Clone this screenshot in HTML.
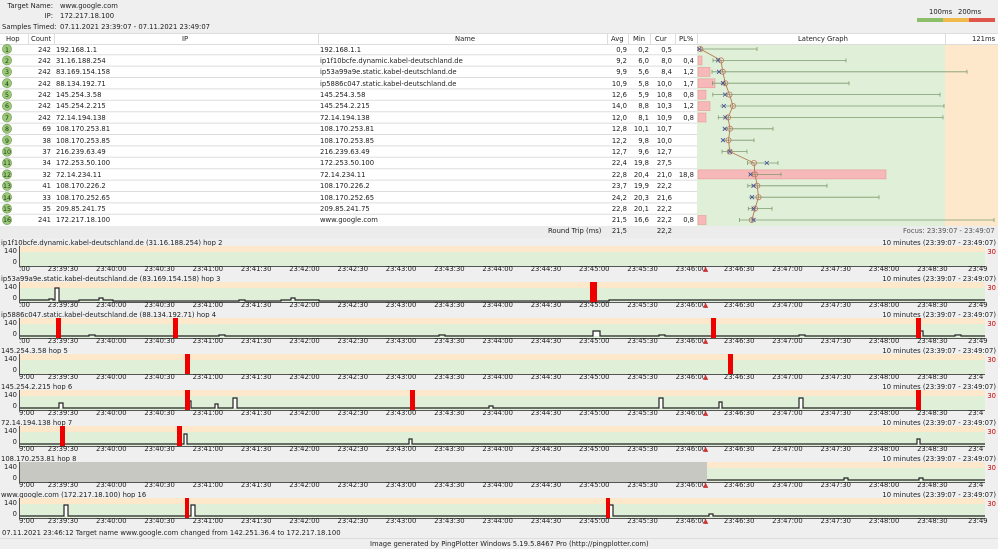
<!DOCTYPE html><html><head><meta charset="utf-8"><style>
*{margin:0;padding:0;box-sizing:border-box}
body{width:998px;height:549px;background:#efefef;font-family:"DejaVu Sans","Liberation Sans",sans-serif;font-size:6.8px;color:#222;position:relative;overflow:hidden}
.a{position:absolute;white-space:nowrap;line-height:9px}
.r{text-align:right}
.p{position:absolute;left:0;width:998px;height:36px}
.p .lab{position:absolute;left:1px;top:1px;line-height:9px}
.p .rt{position:absolute;right:2px;top:1px;line-height:9px}
.p .r30{position:absolute;right:2px;top:10px;color:#c00;line-height:9px}
.p .y1{position:absolute;right:981px;top:9px;line-height:9px}
.p .y0{position:absolute;right:981px;top:20px;line-height:9px}
.p svg{position:absolute;left:19px;top:8px}
.ax{position:absolute;top:27px;left:38.85px;line-height:9px;white-space:nowrap}
.ax span{display:inline-block;width:48.3px;text-align:center}
.p .s{position:absolute;top:27px;line-height:9px}
</style></head><body>
<div class="a r" style="left:0;width:53px;top:2px">Target Name:</div><div class="a" style="left:60px;top:2px">www.google.com</div>
<div class="a r" style="left:0;width:53px;top:12px">IP:</div><div class="a" style="left:60px;top:12px">172.217.18.100</div>
<div class="a" style="left:2px;top:23px">Samples Timed:</div><div class="a" style="left:60px;top:23px">07.11.2021 23:39:07 - 07.11.2021 23:49:07</div>
<div class="a" style="left:929px;top:8px">100ms</div><div class="a" style="left:958px;top:8px">200ms</div>
<svg style="position:absolute;left:0;top:0" width="998" height="240">
<rect x="917" y="18" width="26" height="4" fill="#8dbf6a"/><rect x="943" y="18" width="26" height="4" fill="#f0b94a"/><rect x="969" y="18" width="26" height="4" fill="#e0564a"/>
<rect x="0" y="33" width="998" height="193" fill="#fff"/>
<rect x="697" y="44" width="248" height="182" fill="#e0f0d8"/><rect x="945" y="44" width="53" height="182" fill="#fde8cc"/>
<g stroke="#ddd" stroke-width="1">
<line x1="0" y1="44.5" x2="998" y2="44.5"/><line x1="0" y1="33.5" x2="998" y2="33.5"/>
<line x1="28.5" y1="33" x2="28.5" y2="44"/><line x1="54.5" y1="33" x2="54.5" y2="44"/><line x1="318.5" y1="33" x2="318.5" y2="44"/><line x1="607.5" y1="33" x2="607.5" y2="44"/><line x1="628.5" y1="33" x2="628.5" y2="44"/><line x1="650.5" y1="33" x2="650.5" y2="44"/><line x1="675.5" y1="33" x2="675.5" y2="44"/><line x1="697.5" y1="33" x2="697.5" y2="44"/><line x1="945.5" y1="33" x2="945.5" y2="44"/>
<path d="M0 54.7H697M0 66.1H697M0 77.5H697M0 88.9H697M0 100.3H697M0 111.7H697M0 123.1H697M0 134.5H697M0 145.9H697M0 157.3H697M0 168.7H697M0 180.1H697M0 191.5H697M0 202.9H697M0 214.3H697"/>
</g>
<g fill="#f6b8b8" stroke="#e79a9a" stroke-width=".6">
<rect x="698" y="56" width="4" height="9"/><rect x="698" y="67.4" width="12" height="9"/><rect x="698" y="78.8" width="17" height="9"/><rect x="698" y="90.2" width="8" height="9"/><rect x="698" y="101.6" width="12" height="9"/><rect x="698" y="113" width="8" height="9"/><rect x="698" y="169.9" width="188" height="9"/><rect x="698" y="215.5" width="8" height="9"/>
</g>
<g stroke="#7d9a6c" stroke-width=".8" fill="none">
<path d="M698.5 49H757M757 47v4M713 60.4H846M846 58.4v4M713 58.4v4M712 71.8H967M967 69.8v4M712 69.8v4M712.5 83.2H849M849 81.2v4M712.5 81.2v4M712.8 94.6H940M940 92.6v4M712.8 92.6v4M720 106H944M944 104v4M718.3 117.4H943M943 115.4v4M718.3 115.4v4M723.3 128.8H773M773 126.8v4M722.5 140.2H754M754 138.2v4M722 151.6H747M747 149.6v4M722 149.6v4M747.5 163H778M778 161v4M747.5 161v4M749 174.4H781M781 172.4v4M747.8 185.8H827M827 183.8v4M747.8 183.8v4M748.8 197.2H879M879 195.2v4M748.3 208.6H772M772 206.6v4M748.3 206.6v4M739.5 220H994M994 218v4M739.5 218v4"/>
</g>
<polyline fill="none" stroke="#b07a50" stroke-width=".9" points="700.3,49 721,60.4 722.8,71.8 725.3,83.2 729.5,94.6 733,106 728,117.4 730,128.8 728.5,140.2 729.8,151.6 754,163 755,174.4 757.3,185.8 758.5,197.2 755,208.6 751.8,220"/>
<g fill="none" stroke="#c07a60" stroke-width=".8">
<circle cx="700.3" cy="49" r="2.6"/><circle cx="721" cy="60.4" r="2.6"/><circle cx="722.8" cy="71.8" r="2.6"/><circle cx="725.3" cy="83.2" r="2.6"/><circle cx="729.5" cy="94.6" r="2.6"/><circle cx="733" cy="106" r="2.6"/><circle cx="728" cy="117.4" r="2.6"/><circle cx="730" cy="128.8" r="2.6"/><circle cx="728.5" cy="140.2" r="2.6"/><circle cx="729.8" cy="151.6" r="2.6"/><circle cx="754" cy="163" r="2.6"/><circle cx="755" cy="174.4" r="2.6"/><circle cx="757.3" cy="185.8" r="2.6"/><circle cx="758.5" cy="197.2" r="2.6"/><circle cx="755" cy="208.6" r="2.6"/><circle cx="751.8" cy="220" r="2.6"/>
</g>
<g stroke="#3a4a9a" stroke-width=".8">
<path d="M697.3 47l4 4M701.3 47l-4 4M716 58.4l4 4M720 58.4l-4 4M717 69.8l4 4M721 69.8l-4 4M721 81.2l4 4M725 81.2l-4 4M723 92.6l4 4M727 92.6l-4 4M721.8 104l4 4M725.8 104l-4 4M723.3 115.4l4 4M727.3 115.4l-4 4M722.8 126.8l4 4M726.8 126.8l-4 4M721 138.2l4 4M725 138.2l-4 4M727.8 149.6l4 4M731.8 149.6l-4 4M764.8 161l4 4M768.8 161l-4 4M748.5 172.4l4 4M752.5 172.4l-4 4M751.5 183.8l4 4M755.5 183.8l-4 4M750 195.2l4 4M754 195.2l-4 4M751.5 206.6l4 4M755.5 206.6l-4 4M751.5 218l4 4M755.5 218l-4 4"/>
</g>
<g fill="#9cc87a" stroke="#6c9a50" stroke-width=".6">
<circle cx="7" cy="49" r="4.6"/><circle cx="7" cy="60.4" r="4.6"/><circle cx="7" cy="71.8" r="4.6"/><circle cx="7" cy="83.2" r="4.6"/><circle cx="7" cy="94.6" r="4.6"/><circle cx="7" cy="106" r="4.6"/><circle cx="7" cy="117.4" r="4.6"/><circle cx="7" cy="128.8" r="4.6"/><circle cx="7" cy="140.2" r="4.6"/><circle cx="7" cy="151.6" r="4.6"/><circle cx="7" cy="163" r="4.6"/><circle cx="7" cy="174.4" r="4.6"/><circle cx="7" cy="185.8" r="4.6"/><circle cx="7" cy="197.2" r="4.6"/><circle cx="7" cy="208.6" r="4.6"/><circle cx="7" cy="220" r="4.6"/>
</g>
<rect x="0" y="226" width="998" height="12" fill="#ececec"/>
</svg>
<div class="a" style="left:6px;top:35px">Hop</div><div class="a" style="left:31px;top:35px">Count</div><div class="a" style="left:182px;top:35px">IP</div><div class="a" style="left:455px;top:35px">Name</div><div class="a" style="left:611px;top:35px">Avg</div><div class="a" style="left:633px;top:35px">Min</div><div class="a" style="left:655px;top:35px">Cur</div><div class="a" style="left:679px;top:35px">PL%</div><div class="a" style="left:798px;top:35px">Latency Graph</div><div class="a" style="left:972px;top:35px">121ms</div>
<div style="position:absolute;left:0;top:44.5px;width:998px">
<style>.row{height:11.4px;position:relative;line-height:11.4px}.row div{position:absolute;top:0;white-space:nowrap}.h{left:0;width:14px;text-align:center;font-size:6.3px;color:#1b3a10}.c{left:20px;width:31px;text-align:right}.ip{left:56px}.nm{left:320px}.av{left:600px;width:27px;text-align:right}.mn{left:620px;width:29px;text-align:right}.cu{left:640px;width:32px;text-align:right}.pl{left:670px;width:24px;text-align:right}</style>
<div class="row"><div class="h">1</div><div class="c">242</div><div class="ip">192.168.1.1</div><div class="nm">192.168.1.1</div><div class="av">0,9</div><div class="mn">0,2</div><div class="cu">0,5</div></div>
<div class="row"><div class="h">2</div><div class="c">242</div><div class="ip">31.16.188.254</div><div class="nm">ip1f10bcfe.dynamic.kabel-deutschland.de</div><div class="av">9,2</div><div class="mn">6,0</div><div class="cu">8,0</div><div class="pl">0,4</div></div>
<div class="row"><div class="h">3</div><div class="c">242</div><div class="ip">83.169.154.158</div><div class="nm">ip53a99a9e.static.kabel-deutschland.de</div><div class="av">9,9</div><div class="mn">5,6</div><div class="cu">8,4</div><div class="pl">1,2</div></div>
<div class="row"><div class="h">4</div><div class="c">242</div><div class="ip">88.134.192.71</div><div class="nm">ip5886c047.static.kabel-deutschland.de</div><div class="av">10,9</div><div class="mn">5,8</div><div class="cu">10,0</div><div class="pl">1,7</div></div>
<div class="row"><div class="h">5</div><div class="c">242</div><div class="ip">145.254.3.58</div><div class="nm">145.254.3.58</div><div class="av">12,6</div><div class="mn">5,9</div><div class="cu">10,8</div><div class="pl">0,8</div></div>
<div class="row"><div class="h">6</div><div class="c">242</div><div class="ip">145.254.2.215</div><div class="nm">145.254.2.215</div><div class="av">14,0</div><div class="mn">8,8</div><div class="cu">10,3</div><div class="pl">1,2</div></div>
<div class="row"><div class="h">7</div><div class="c">242</div><div class="ip">72.14.194.138</div><div class="nm">72.14.194.138</div><div class="av">12,0</div><div class="mn">8,1</div><div class="cu">10,9</div><div class="pl">0,8</div></div>
<div class="row"><div class="h">8</div><div class="c">69</div><div class="ip">108.170.253.81</div><div class="nm">108.170.253.81</div><div class="av">12,8</div><div class="mn">10,1</div><div class="cu">10,7</div></div>
<div class="row"><div class="h">9</div><div class="c">38</div><div class="ip">108.170.253.85</div><div class="nm">108.170.253.85</div><div class="av">12,2</div><div class="mn">9,8</div><div class="cu">10,0</div></div>
<div class="row"><div class="h">10</div><div class="c">37</div><div class="ip">216.239.63.49</div><div class="nm">216.239.63.49</div><div class="av">12,7</div><div class="mn">9,6</div><div class="cu">12,7</div></div>
<div class="row"><div class="h">11</div><div class="c">34</div><div class="ip">172.253.50.100</div><div class="nm">172.253.50.100</div><div class="av">22,4</div><div class="mn">19,8</div><div class="cu">27,5</div></div>
<div class="row"><div class="h">12</div><div class="c">32</div><div class="ip">72.14.234.11</div><div class="nm">72.14.234.11</div><div class="av">22,8</div><div class="mn">20,4</div><div class="cu">21,0</div><div class="pl">18,8</div></div>
<div class="row"><div class="h">13</div><div class="c">41</div><div class="ip">108.170.226.2</div><div class="nm">108.170.226.2</div><div class="av">23,7</div><div class="mn">19,9</div><div class="cu">22,2</div></div>
<div class="row"><div class="h">14</div><div class="c">33</div><div class="ip">108.170.252.65</div><div class="nm">108.170.252.65</div><div class="av">24,2</div><div class="mn">20,3</div><div class="cu">21,6</div></div>
<div class="row"><div class="h">15</div><div class="c">35</div><div class="ip">209.85.241.75</div><div class="nm">209.85.241.75</div><div class="av">22,8</div><div class="mn">20,1</div><div class="cu">22,2</div></div>
<div class="row"><div class="h">16</div><div class="c">241</div><div class="ip">172.217.18.100</div><div class="nm">www.google.com</div><div class="av">21,5</div><div class="mn">16,6</div><div class="cu">22,2</div><div class="pl">0,8</div></div>
</div>
<div class="a" style="left:548px;top:227px">Round Trip (ms)</div><div class="a r" style="left:600px;width:27px;top:227px">21,5</div><div class="a r" style="left:640px;width:32px;top:227px">22,2</div><div class="a" style="left:903px;top:227px;color:#555">Focus: 23:39:07 - 23:49:07</div>

<!-- panels -->
<div class="p" style="top:238px"><div class="lab">ip1f10bcfe.dynamic.kabel-deutschland.de (31.16.188.254) hop 2</div><div class="rt">10 minutes (23:39:07 - 23:49:07)</div><div class="r30">30</div><div class="y1">140</div><div class="y0">0</div>
<svg width="966" height="21"><rect width="966" height="6" fill="#fde8cc"/><rect y="6" width="966" height="14" fill="#e0f0d8"/><path d="M.5 0V20.5H966" stroke="#555" fill="none"/></svg>
<div class="s" style="left:19px">:00</div><div class="ax"><span>23:39:30</span><span>23:40:00</span><span>23:40:30</span><span>23:41:00</span><span>23:41:30</span><span>23:42:00</span><span>23:42:30</span><span>23:43:00</span><span>23:43:30</span><span>23:44:00</span><span>23:44:30</span><span>23:45:00</span><span>23:45:30</span><span>23:46:00</span><span>23:46:30</span><span>23:47:00</span><span>23:47:30</span><span>23:48:00</span><span>23:48:30</span></div><div class="s" style="left:968px">23:49</div><div class="s" style="left:703px;color:#c33">▲</div></div>

<div class="p" style="top:274px"><div class="lab">ip53a99a9e.static.kabel-deutschland.de (83.169.154.158) hop 3</div><div class="rt">10 minutes (23:39:07 - 23:49:07)</div><div class="r30">30</div><div class="y1">140</div><div class="y0">0</div>
<svg width="966" height="21"><rect width="966" height="6" fill="#fde8cc"/><rect y="6" width="966" height="14" fill="#e0f0d8"/><path d="M0 18H30V17H34V18H36V6H40V19H60V18H80V16H84V18H94V19H220V18H226V19H262V18H272V16H276V18H300V19H590V18H966" stroke="#222" fill="#fff" stroke-width="1.2"/><rect x="571" y="0" width="7" height="20" fill="#e00"/><path d="M.5 0V20.5H966" stroke="#555" fill="none"/></svg>
<div class="s" style="left:19px">:00</div><div class="ax"><span>23:39:30</span><span>23:40:00</span><span>23:40:30</span><span>23:41:00</span><span>23:41:30</span><span>23:42:00</span><span>23:42:30</span><span>23:43:00</span><span>23:43:30</span><span>23:44:00</span><span>23:44:30</span><span>23:45:00</span><span>23:45:30</span><span>23:46:00</span><span>23:46:30</span><span>23:47:00</span><span>23:47:30</span><span>23:48:00</span><span>23:48:30</span></div><div class="s" style="left:968px">23:49</div><div class="s" style="left:703px;color:#c33">▲</div></div>

<div class="p" style="top:310px"><div class="lab">ip5886c047.static.kabel-deutschland.de (88.134.192.71) hop 4</div><div class="rt">10 minutes (23:39:07 - 23:49:07)</div><div class="r30">30</div><div class="y1">140</div><div class="y0">0</div>
<svg width="966" height="21"><rect width="966" height="6" fill="#fde8cc"/><rect y="6" width="966" height="14" fill="#e0f0d8"/><path d="M0 18H70V17H76V18H200V17H206V18H420V17H426V18H574V13H581V18H640V17H646V18H780V17H786V18H900V13H904V18H936V17H942V18H966" stroke="#222" fill="#fff" stroke-width="1.2"/><g fill="#e00"><rect x="37" width="5" height="20"/><rect x="154" width="5" height="20"/><rect x="692" width="5" height="20"/><rect x="897" width="5" height="20"/></g><path d="M.5 0V20.5H966" stroke="#555" fill="none"/></svg>
<div class="s" style="left:19px">:00</div><div class="ax"><span>23:39:30</span><span>23:40:00</span><span>23:40:30</span><span>23:41:00</span><span>23:41:30</span><span>23:42:00</span><span>23:42:30</span><span>23:43:00</span><span>23:43:30</span><span>23:44:00</span><span>23:44:30</span><span>23:45:00</span><span>23:45:30</span><span>23:46:00</span><span>23:46:30</span><span>23:47:00</span><span>23:47:30</span><span>23:48:00</span><span>23:48:30</span></div><div class="s" style="left:968px">23:49</div><div class="s" style="left:703px;color:#c33">▲</div></div>

<div class="p" style="top:346px"><div class="lab">145.254.3.58 hop 5</div><div class="rt">10 minutes (23:39:07 - 23:49:07)</div><div class="r30">30</div><div class="y1">140</div><div class="y0">0</div>
<svg width="966" height="21"><rect width="966" height="6" fill="#fde8cc"/><rect y="6" width="966" height="14" fill="#e0f0d8"/><g fill="#e00"><rect x="166" width="5" height="20"/><rect x="709" width="5" height="20"/></g><path d="M.5 0V20.5H966" stroke="#555" fill="none"/></svg>
<div class="s" style="left:19px">9:00</div><div class="ax"><span>23:39:30</span><span>23:40:00</span><span>23:40:30</span><span>23:41:00</span><span>23:41:30</span><span>23:42:00</span><span>23:42:30</span><span>23:43:00</span><span>23:43:30</span><span>23:44:00</span><span>23:44:30</span><span>23:45:00</span><span>23:45:30</span><span>23:46:00</span><span>23:46:30</span><span>23:47:00</span><span>23:47:30</span><span>23:48:00</span><span>23:48:30</span></div><div class="s" style="left:968px">23:4</div><div class="s" style="left:703px;color:#c33">▲</div></div>

<div class="p" style="top:382px"><div class="lab">145.254.2.215 hop 6</div><div class="rt">10 minutes (23:39:07 - 23:49:07)</div><div class="r30">30</div><div class="y1">140</div><div class="y0">0</div>
<svg width="966" height="21"><rect width="966" height="6" fill="#fde8cc"/><rect y="6" width="966" height="14" fill="#e0f0d8"/><path d="M0 18H40V13H44V18H168V11H172V18H196V14H199V18H214V8H218V18H470V16H474V18H640V8H644V18H700V12H703V18H780V8H784V18H900" stroke="#222" fill="#fff" stroke-width="1.2"/><g fill="#e00"><rect x="166" width="5" height="20"/><rect x="391" width="5" height="20"/><rect x="897" width="5" height="20"/></g><path d="M.5 0V20.5H966" stroke="#555" fill="none"/></svg>
<div class="s" style="left:19px">9:00</div><div class="ax"><span>23:39:30</span><span>23:40:00</span><span>23:40:30</span><span>23:41:00</span><span>23:41:30</span><span>23:42:00</span><span>23:42:30</span><span>23:43:00</span><span>23:43:30</span><span>23:44:00</span><span>23:44:30</span><span>23:45:00</span><span>23:45:30</span><span>23:46:00</span><span>23:46:30</span><span>23:47:00</span><span>23:47:30</span><span>23:48:00</span><span>23:48:30</span></div><div class="s" style="left:968px">23:4</div><div class="s" style="left:703px;color:#c33">▲</div></div>

<div class="p" style="top:418px"><div class="lab">72.14.194.138 hop 7</div><div class="rt">10 minutes (23:39:07 - 23:49:07)</div><div class="r30">30</div><div class="y1">140</div><div class="y0">0</div>
<svg width="966" height="21"><rect width="966" height="6" fill="#fde8cc"/><rect y="6" width="966" height="14" fill="#e0f0d8"/><path d="M0 18H165V8H168V18H390V13H393V18H898V13H901V18H966" stroke="#222" fill="#fff" stroke-width="1.2"/><g fill="#e00"><rect x="41" width="5" height="20"/><rect x="158" width="5" height="20"/></g><path d="M.5 0V20.5H966" stroke="#555" fill="none"/></svg>
<div class="s" style="left:19px">9:00</div><div class="ax"><span>23:39:30</span><span>23:40:00</span><span>23:40:30</span><span>23:41:00</span><span>23:41:30</span><span>23:42:00</span><span>23:42:30</span><span>23:43:00</span><span>23:43:30</span><span>23:44:00</span><span>23:44:30</span><span>23:45:00</span><span>23:45:30</span><span>23:46:00</span><span>23:46:30</span><span>23:47:00</span><span>23:47:30</span><span>23:48:00</span><span>23:48:30</span></div><div class="s" style="left:968px">23:4</div><div class="s" style="left:703px;color:#c33">▲</div></div>

<div class="p" style="top:454px"><div class="lab">108.170.253.81 hop 8</div><div class="rt">10 minutes (23:39:07 - 23:49:07)</div><div class="r30">30</div><div class="y1">140</div><div class="y0">0</div>
<svg width="966" height="21"><rect width="966" height="6" fill="#fde8cc"/><rect y="6" width="966" height="14" fill="#e0f0d8"/><rect width="688" height="20" fill="#c8c8c2"/><path d="M688 18H825V16H829V18H900V16H904V18H966" stroke="#222" fill="none" stroke-width="1.2"/><path d="M.5 0V20.5H966" stroke="#555" fill="none"/></svg>
<div class="s" style="left:19px">9:00</div><div class="ax"><span>23:39:30</span><span>23:40:00</span><span>23:40:30</span><span>23:41:00</span><span>23:41:30</span><span>23:42:00</span><span>23:42:30</span><span>23:43:00</span><span>23:43:30</span><span>23:44:00</span><span>23:44:30</span><span>23:45:00</span><span>23:45:30</span><span>23:46:00</span><span>23:46:30</span><span>23:47:00</span><span>23:47:30</span><span>23:48:00</span><span>23:48:30</span></div><div class="s" style="left:968px">23:4</div><div class="s" style="left:703px;color:#c33">▲</div></div>

<div class="p" style="top:490px"><div class="lab">www.google.com (172.217.18.100) hop 16</div><div class="rt">10 minutes (23:39:07 - 23:49:07)</div><div class="r30">30</div><div class="y1">140</div><div class="y0">0</div>
<svg width="966" height="21"><rect width="966" height="6" fill="#fde8cc"/><rect y="6" width="966" height="14" fill="#e0f0d8"/><path d="M0 18H45V7H49V18H172V7H176V18H590V7H594V18H690V16H694V18H966" stroke="#222" fill="#fff" stroke-width="1.2"/><g fill="#e00"><rect x="166" width="4" height="20"/><rect x="587" width="4" height="20"/></g><path d="M.5 0V20.5H966" stroke="#555" fill="none"/></svg>
<div class="s" style="left:19px">9:00</div><div class="ax"><span>23:39:30</span><span>23:40:00</span><span>23:40:30</span><span>23:41:00</span><span>23:41:30</span><span>23:42:00</span><span>23:42:30</span><span>23:43:00</span><span>23:43:30</span><span>23:44:00</span><span>23:44:30</span><span>23:45:00</span><span>23:45:30</span><span>23:46:00</span><span>23:46:30</span><span>23:47:00</span><span>23:47:30</span><span>23:48:00</span><span>23:48:30</span></div><div class="s" style="left:968px">23:49</div><div class="s" style="left:703px;color:#c33">▲</div></div>

<div class="a" style="left:2px;top:529px">07.11.2021 23:46:12 Target name www.google.com changed from 142.251.36.4 to 172.217.18.100</div>
<div style="position:absolute;left:0;top:538px;width:998px;height:1px;background:#ddd"></div>
<div class="a" style="left:370px;top:540px">Image generated by PingPlotter Windows 5.19.5.8467 Pro (http://pingplotter.com)</div>
</body></html>
